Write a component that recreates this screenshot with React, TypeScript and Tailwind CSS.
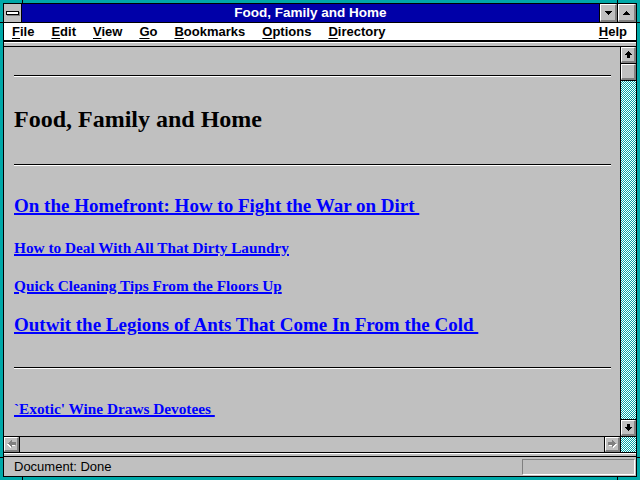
import React from 'react';

const bevel =
  'bg-[#c0c0c0] border-t border-l border-t-white border-l-white border-b-2 border-r-2 border-b-[#808080] border-r-[#808080]';

const checker =
  'bg-[conic-gradient(#00a8a8_0_25%,#ffffff_0_50%,#00a8a8_0_75%,#ffffff_0)] bg-[length:2px_2px]';

function ScrollArrowUp({ down = false }: { down?: boolean }) {
  return (
    <svg width="7" height="7" viewBox="0 0 7 7" shapeRendering="crispEdges" style={down ? { transform: 'scaleY(-1)' } : undefined}>
      <path d="M3 0h1v1h1v1h1v1h1v1h-2v3h-3v-3h-2v-1h1v-1h1v-1h1z" fill="#000" />
    </svg>
  );
}

function DisabledArrow({ left = false }: { left?: boolean }) {
  const d = 'M4 0h1v1h1v1h1v1h1v1h-1v1h-1v1h-1v1h-1v-2h-4v-3h4z';
  return (
    <svg width="9" height="8" viewBox="0 0 9 8" shapeRendering="crispEdges" style={left ? { transform: 'scaleX(-1)' } : undefined}>
      <path d={d} fill="#fff" transform="translate(1 1)" />
      <path d={d} fill="#808080" />
    </svg>
  );
}

function Triangle({ up = false }: { up?: boolean }) {
  return (
    <svg width="7" height="4" viewBox="0 0 7 4" shapeRendering="crispEdges" style={up ? { transform: 'scaleY(-1)' } : undefined}>
      <path d="M0 0h7v1h-1v1h-1v1h-1v1h-1v-1h-1v-1h-1v-1h-1z" fill="#000" />
    </svg>
  );
}

const menus = ['File', 'Edit', 'View', 'Go', 'Bookmarks', 'Options', 'Directory'];

function MenuItem({ label }: { label: string }) {
  return (
    <span>
      <span className="underline underline-offset-[2px]">{label[0]}</span>
      {label.slice(1)}
    </span>
  );
}

const link =
  "block w-fit text-[#0000ff] font-bold underline decoration-2 underline-offset-[1px] font-['Liberation_Serif',serif] whitespace-pre";

export default function App() {
  return (
    <div className="relative w-[640px] h-[480px] bg-[#00a8a8] p-[3px] font-['Liberation_Sans',Arial,sans-serif] overflow-hidden">
      {/* frame segment marks */}
      <div className="absolute left-[22px] top-0 w-px h-[4px] bg-black" />
      <div className="absolute left-[617px] top-0 w-px h-[4px] bg-black" />
      <div className="absolute left-[22px] bottom-0 w-px h-[4px] bg-black" />
      <div className="absolute left-[617px] bottom-0 w-px h-[4px] bg-black" />
      <div className="absolute left-0 top-[22px] w-[4px] h-px bg-black" />
      <div className="absolute right-0 top-[22px] w-[4px] h-px bg-black" />
      <div className="absolute left-0 top-[457px] w-[4px] h-px bg-black" />
      <div className="absolute right-0 top-[457px] w-[4px] h-px bg-black" />

      <div className="w-full h-full border border-black flex flex-col bg-[#c0c0c0]">
        {/* title bar */}
        <div className="flex h-[19px] border-b border-black shrink-0">
          <div className="w-[18px] bg-[#c0c0c0] border-r border-black flex items-center justify-center">
            <div className="w-[13px] h-[4px] bg-white border border-black shadow-[1px_1px_0_#808080]" />
          </div>
          <div className="flex-1 bg-[#0000a8] text-white font-bold text-[13.5px] leading-[18px] text-center">
            Food, Family and Home
          </div>
          <div className="w-px bg-black" />
          <div className={`w-[17px] ${bevel} flex items-center justify-center`}>
            <Triangle />
          </div>
          <div className="w-px bg-black" />
          <div className={`w-[18px] ${bevel} flex items-center justify-center`}>
            <Triangle up />
          </div>
        </div>

        {/* menu bar */}
        <div className="flex h-[19px] bg-white border-b-2 border-black text-[13px] leading-[17px] font-bold text-black pl-[8px] pr-[9px] gap-[17px] shrink-0">
          {menus.map((m) => (
            <MenuItem key={m} label={m} />
          ))}
          <span className="ml-auto">
            <MenuItem label="Help" />
          </span>
        </div>
        <div className="h-[5px] border-t border-white border-b border-b-black shrink-0" />

        {/* main area */}
        <div className="flex h-[405px] shrink-0">
          <div className="flex-1 flex flex-col">
            <div className="h-[389px] pl-[10px] pr-[9px] overflow-hidden">
              <div className="mt-[28px] border-t border-black border-b border-b-white" />
              <h1 className="mt-[28px] h-[28px] text-[24px] leading-[28px] font-bold text-black font-['Liberation_Serif',serif]">
                Food, Family and Home
              </h1>
              <div className="mt-[31px] border-t border-black border-b border-b-white" />
              <a className={`${link} mt-[29px] text-[19px] leading-[22px]`}>On the Homefront: How to Fight the War on Dirt </a>
              <a className={`${link} mt-[22px] text-[15.3px] leading-[18px]`}>How to Deal With All That Dirty Laundry</a>
              <a className={`${link} mt-[20px] text-[15.3px] leading-[18px]`}>Quick Cleaning Tips From the Floors Up</a>
              <a className={`${link} mt-[19px] text-[19px] leading-[22px]`}>Outwit the Legions of Ants That Come In From the Cold </a>
              <div className="mt-[31px] border-t border-black border-b border-b-white" />
              <a className={`${link} mt-[31px] text-[15.3px] leading-[18px]`}>`Exotic' Wine Draws Devotees </a>
            </div>
            {/* horizontal scrollbar */}
            <div className="h-[16px] border-t border-black flex">
              <div className={`w-[15px] ${bevel} flex items-center justify-center`}>
                <DisabledArrow left />
              </div>
              <div className="w-px bg-black" />
              <div className="flex-1 bg-[#c0c0c0]" />
              <div className="w-px bg-black" />
              <div className={`w-[15px] ${bevel} flex items-center justify-center`}>
                <DisabledArrow />
              </div>
            </div>
          </div>
          {/* vertical scrollbar */}
          <div className="w-[16px] border-l border-black flex flex-col">
            <div className={`h-[16px] ${bevel} flex items-center justify-center`}>
              <ScrollArrowUp />
            </div>
            <div className="h-px bg-black" />
            <div className={`h-[16px] ${bevel}`} />
            <div className="h-px bg-black" />
            <div className={`flex-1 ${checker}`} />
            <div className="h-px bg-black" />
            <div className={`h-[16px] ${bevel} flex items-center justify-center`}>
              <ScrollArrowUp down />
            </div>
            <div className="h-px bg-black" />
            <div className={`h-[15px] ${checker}`} />
          </div>
        </div>

        {/* separator */}
        <div className="h-[5px] border-t border-black border-b border-b-black shrink-0 flex flex-col">
          <div className="h-px bg-white" />
        </div>

        {/* status bar */}
        <div className="flex-1 flex items-start text-[13px] leading-[19px] text-black pl-[10px]">
          <span>Document: Done</span>
          <div className="ml-auto mt-[2px] mr-px w-[113px] h-[16px] border-t border-l border-[#808080] border-b border-r border-b-white border-r-white" />
        </div>
      </div>
    </div>
  );
}
